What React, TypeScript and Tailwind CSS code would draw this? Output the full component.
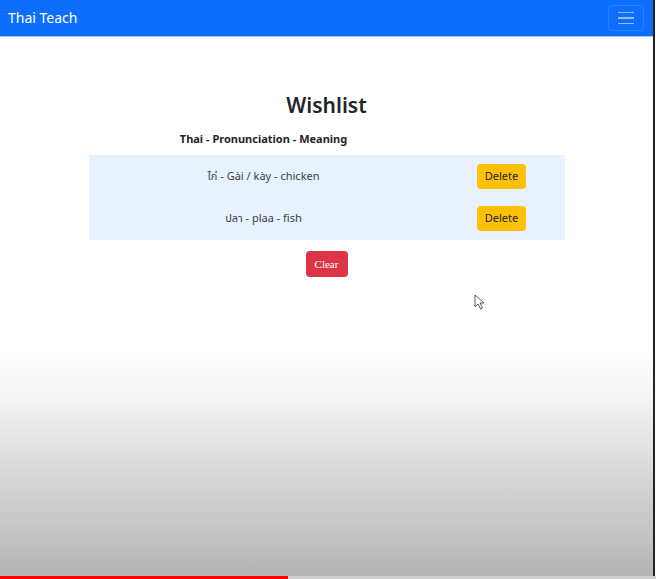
import React from "react";

const font = { fontFamily: '"Segoe UI", "Noto Sans", "Noto Sans Thai", "Noto Sans CJK SC", sans-serif' };

export default function App() {
  const rows = [
    { text: "ไก่ - Gài / kày - chicken" },
    { text: "ปลา - plaa - fish" },
  ];
  return (
    <div className="relative w-[656px] h-[579px] overflow-hidden bg-white flex flex-col" style={font}>
      <div className="flex flex-1 min-h-0">
        <div className="flex flex-col w-[655px] border-r-2 border-[#222] bg-[linear-gradient(to_bottom,#ffffff_0px,#ffffff_350px,#f3f3f3_400px,#d9d9d9_470px,#b5b5b5_576px)]">
          <nav className="h-[37px] bg-[#0d6efd] flex items-center justify-between pl-[8px] pr-[9px] border-b border-[#9ec5fe]">
            <span className="text-white text-[14px] leading-none">Thai Teach</span>
            <div className="w-[36px] h-[26px] rounded-[4px] border border-[rgba(255,255,255,0.12)] flex flex-col items-center justify-center gap-[4px]">
              <span className="block w-[16px] h-[1.5px] bg-[rgba(255,255,255,0.55)]" />
              <span className="block w-[16px] h-[1.5px] bg-[rgba(255,255,255,0.55)]" />
              <span className="block w-[16px] h-[1.5px] bg-[rgba(255,255,255,0.55)]" />
            </div>
          </nav>
          <main className="flex flex-col items-center pt-[58px]">
            <h1 className="text-[21px] font-semibold text-[#212529] leading-none">Wishlist</h1>
            <div className="w-[476px] mt-[17px]">
              <div className="grid grid-cols-[350px_126px]">
                <div className="text-center text-[11px] font-bold text-[#212529] leading-none pb-[11px]">Thai - Pronunciation - Meaning</div>
                <div />
              </div>
              <div className="bg-[#e8f1fe] py-[9px] flex flex-col gap-[17px]">
                {rows.map((r, i) => (
                  <div key={i} className="grid grid-cols-[350px_126px] items-center">
                    <div className="text-center text-[11px] text-[#3a3f44]">{r.text}</div>
                    <div className="flex justify-center">
                      <button className="h-[25px] w-[49px] rounded-[4px] bg-[#ffc107] text-[11px] text-[#212529]">Delete</button>
                    </div>
                  </div>
                ))}
              </div>
              <div className="flex justify-center mt-[11px]">
                <button className="h-[26px] w-[42px] rounded-[4px] bg-[#dc3545] text-[11px] text-white" style={{ fontFamily: '"Liberation Serif", serif' }}>Clear</button>
              </div>
            </div>
          </main>
        </div>
      </div>
      <div className="flex h-[3px]">
        <div className="w-[288px] bg-[#ff0000]" />
        <div className="flex-1 bg-[#cfcfcf]" />
      </div>
      <svg className="absolute left-[474px] top-[294px]" width="12" height="16" viewBox="0 0 12 16">
        <path d="M1 1 L1 13 L4 10 L6.5 15 L8.5 14 L6 9 L10 9 Z" fill="#fff" stroke="#555" strokeWidth="1" strokeLinejoin="round" />
      </svg>
    </div>
  );
}
